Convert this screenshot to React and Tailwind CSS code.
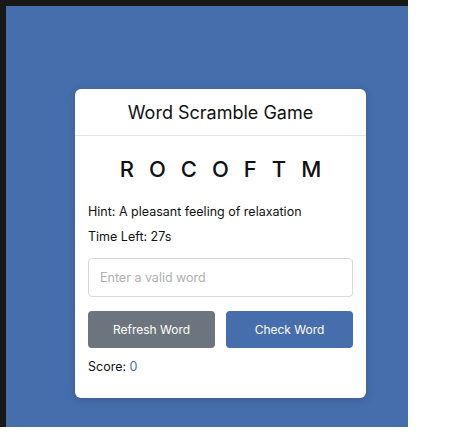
export default function App() {
  const font = { fontFamily: '"Inter", "Noto Sans", sans-serif' };
  return (
    <div className="w-[465px] h-[446px] bg-white" style={font}>
      <div className="w-[408px] h-[427px] bg-[#181818] pt-[6px] pl-[6px]">
        <div className="w-full h-full bg-[#466dac] pt-[83px] pl-[69px]">
          <div className="w-[291px] h-[309px] bg-white rounded-[6px] shadow-[0_2px_8px_rgba(0,0,0,0.15)] flex flex-col">
            <div className="h-[47px] border-b border-[#e6e6e6] flex items-center justify-center text-[18px] text-[#111]">
              Word Scramble Game
            </div>
            <div className="px-[13px] flex flex-col">
              <div className="mt-[14px] h-[38px] flex items-center justify-center gap-[15px] text-[22px] text-[#111] font-medium">
                {"ROCOFTM".split("").map((c, i) => (
                  <span key={i}>{c}</span>
                ))}
              </div>
              <div className="mt-[13px] h-[21px] leading-[21px] text-[12.5px] text-[#111]">
                Hint: A pleasant feeling of relaxation
              </div>
              <div className="mt-[4px] h-[21px] leading-[21px] text-[12.5px] text-[#111]">
                Time Left: 27s
              </div>
              <input
                className="mt-[11px] h-[39px] w-full border border-[#d9d9d9] rounded-[4px] px-[11px] text-[12.5px] outline-none placeholder:text-[#b0b0b0]"
                placeholder="Enter a valid word"
                style={font}
              />
              <div className="mt-[14px] flex gap-[11px]">
                <button className="flex-1 h-[37px] rounded-[4px] bg-[#6c757d] text-white text-[12px]" style={font}>
                  Refresh Word
                </button>
                <button className="flex-1 h-[37px] rounded-[4px] bg-[#466dac] text-white text-[12px]" style={font}>
                  Check Word
                </button>
              </div>
              <div className="mt-[8px] h-[21px] leading-[21px] text-[12.5px] text-[#111]">
                Score: <span className="text-[#466dac]">0</span>
              </div>
            </div>
          </div>
        </div>
      </div>
    </div>
  );
}
